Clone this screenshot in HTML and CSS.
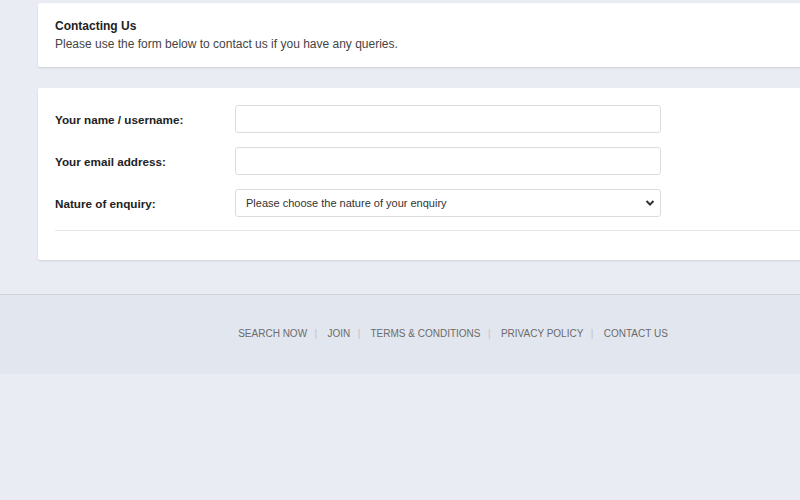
FILE: index.html
```html
<!DOCTYPE html>
<html lang="en">
<head>
  <meta charset="UTF-8" />
  <meta name="viewport" content="width=device-width, initial-scale=1.0"/>
  <title>Contact Us</title>
  <link rel="stylesheet" href="styles.css">
</head>
<body>

  <div class="main">
    <div class="card intro">
      <h3>Contacting Us</h3>
      <p>Please use the form below to contact us if you have any queries.</p>
    </div>

    <div class="card form-card">
      <form class="contact-form">
        <div class="row">
          <label for="username">Your name / username:</label>
          <input type="text" id="username" />
        </div>
        <div class="row">
          <label for="email">Your email address:</label>
          <input type="text" id="email" />
        </div>
        <div class="row">
          <label for="nature">Nature of enquiry:</label>
          <select id="nature">
            <option>Please choose the nature of your enquiry</option>
          </select>
        </div>
        <hr class="divider" />
      </form>
    </div>
  </div>

  <footer>
    <nav class="links">
      <a href="#">SEARCH NOW</a><span>|</span>
      <a href="#">JOIN</a><span>|</span>
      <a href="#">TERMS &amp; CONDITIONS</a><span>|</span>
      <a href="#">PRIVACY POLICY</a><span>|</span>
      <a href="#">CONTACT US</a>
    </nav>
  </footer>

</body>
</html>
```

FILE: styles.css
```css
body {
  font-family: "Liberation Sans", Arial, sans-serif;
  background: #e9ecf3;
  color: #222;
  margin: 0;
  padding: 0;
  overflow-x: hidden;
}

.main {
  padding: 3px 0 0 38px;
}

.card {
  background: #fff;
  margin-right: -20px;
  box-shadow: 0 1px 2px rgba(0,0,0,0.12);
  border-radius: 2px;
}

.intro {
  padding: 16px 17px 17px;
  height: 31px;
}

.intro h3 {
  margin: 0;
  font-size: 12px;
  line-height: 15px;
  color: #222;
}

.intro p {
  margin: 3px 0 0;
  font-size: 12px;
  line-height: 14px;
  color: #444;
}

.form-card {
  margin-top: 21px;
  padding: 17px 0 29px 17px;
}

.contact-form .row {
  display: flex;
  align-items: center;
  margin-bottom: 14px;
}

.contact-form label {
  width: 180px;
  font-size: 11.7px;
  font-weight: bold;
  color: #222;
}

.contact-form input,
.contact-form select {
  box-sizing: border-box;
  width: 426px;
  height: 28px;
  border: 1px solid #dcdcdc;
  border-radius: 3px;
  background: #fff;
  font-family: inherit;
  font-size: 11px;
  color: #333;
  padding: 0 10px;
}

.contact-form select {
  appearance: none;
  padding-right: 28px;
  background-image: url("data:image/svg+xml;utf8,<svg xmlns='http://www.w3.org/2000/svg' width='10' height='8' viewBox='0 0 10 8'><path d='M1.5 2 L5 5.5 L8.5 2' fill='none' stroke='%23333' stroke-width='2'/></svg>");
  background-repeat: no-repeat;
  background-position: right 5px center;
}

.divider {
  border: none;
  border-top: 1px solid #e8e8e8;
  margin: 0;
  margin-top: -1px;
}

footer {
  margin-top: 34px;
  border-top: 1px solid #cfd3da;
  background: #e2e6ee;
  height: 80px;
  display: flex;
  align-items: center;
  justify-content: center;
  padding-left: 106px;
  padding-bottom: 3px;
  box-sizing: border-box;
}

.links {
  font-size: 10px;
  color: #666;
}

.links a {
  color: #6b6b6b;
  text-decoration: none;
}

.links span {
  color: #c2c2c2;
  margin: 0 7.5px;
}
```
